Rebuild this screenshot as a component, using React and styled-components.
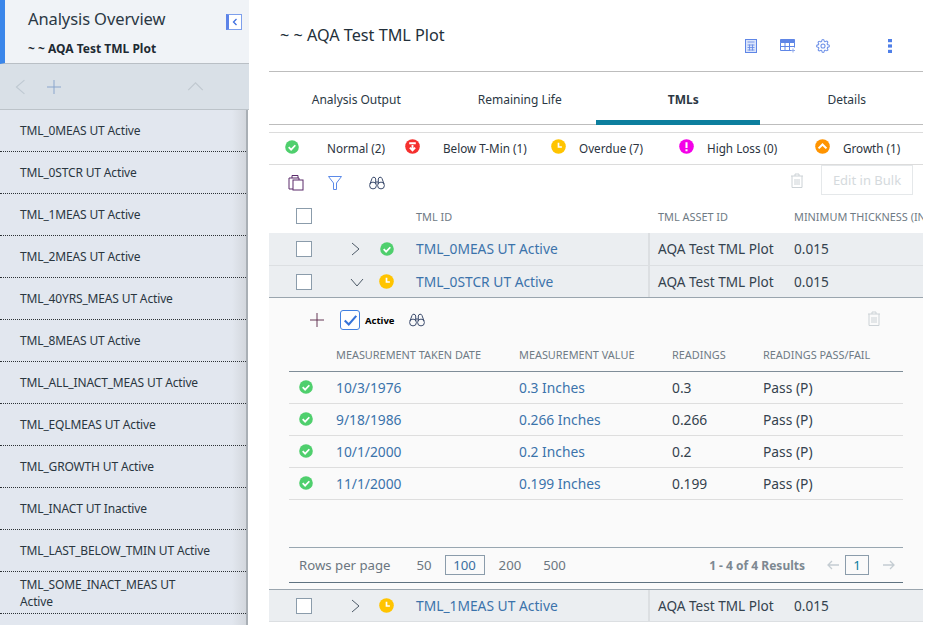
import React from 'react';
import styled, { createGlobalStyle } from 'styled-components';

const Global = createGlobalStyle`
  html, body { margin: 0; padding: 0; background: #fff; }
  body { width: 943px; height: 625px; overflow: hidden; font-family: "Noto Sans", "Open Sans", sans-serif; color: #27343e; }
  * { box-sizing: border-box; }
`;

const Page = styled.div`display: flex; width: 943px; height: 625px; overflow: hidden;`;
const Sidebar = styled.aside`width: 249px; flex: none; display: flex; flex-direction: column; height: 625px;`;
const SideHead = styled.header`
  height: 64px; background: #f0f3f7; border-left: 5px solid #3b86ea; border-bottom: 1px solid #b9bfc5;
  padding: 8px 0 0 23px; position: relative;
`;
const SideTitle = styled.div`font-size: 16.5px; line-height: 21px; color: #2b3844; letter-spacing: -.1px;`;
const SideSub = styled.div`font-size: 12px; font-weight: 700; line-height: 16px; margin-top: 12px; color: #1e2a33;`;
const Collapse = styled.div`
  position: absolute; left: 221px; top: 14px; width: 16px; height: 16px; border: 1px solid #7d9fec; border-left: 3px solid #5c83e8;
  background: #fff; display: flex; align-items: center; justify-content: center;
`;
const SideBar2 = styled.div`
  height: 46px; background: #d9e0e7; border-bottom: 1px solid #bcc3c9; display: flex; align-items: center; padding-left: 13px; flex: none;
`;
const SideGap = styled.span`width: ${p => p.$w}px; flex: none;`;
const SideList = styled.div`
  flex: 1; background: linear-gradient(90deg, #e2e7ef 0, #e2e7ef 232px, #d3d7dd 246px); border-right: 2px solid #a9afb5; overflow: hidden;
  margin-right: 1px; width: 248px;
`;
const SideItem = styled.div`
  height: 42px; padding: 0 0 0 20px; display: flex; align-items: center; font-size: 12px; line-height: 17px; color: #2a363f;
  border-bottom: 1px dotted #2c3236; letter-spacing: -.15px; white-space: pre-line;
`;
const Main = styled.main`width: 654px; margin-left: 20px; flex: none; height: 625px; overflow: hidden;`;
const TitleBar = styled.div`height: 72px; border-bottom: 1px solid #bdbdbd; position: relative; padding: 24px 0 0 11px;`;
const PageTitle = styled.h1`margin: 0; font-size: 16.2px; line-height: 22px; font-weight: 400; color: #23303a;`;
const TopIcons = styled.div`position: absolute; top: 39px; left: 476px; display: flex; align-items: center;`;
const TopIcon = styled.span`display: flex; width: ${p => p.$w}px;`;
const Tabs = styled.nav`height: 53px; border-bottom: 1px solid #bdbdbd; display: flex; width: 654px;`;
const Tab = styled.div`
  width: 163.5px; flex: none; text-align: center; font-size: 12px; line-height: 18px; padding: 19px 0 0 11px; height: 53px; color: #2b3844;
  font-weight: ${p => (p.$active ? 700 : 400)}; border-bottom: ${p => (p.$active ? '5px solid #0d7f9e' : 'none')};
`;
const Legend = styled.div`
  margin-top: 7px; height: 33px; border-top: 1px solid #dcdcdc; border-bottom: 1px solid #dcdcdc; display: grid;
  grid-template-columns: 120px 146px 128px 136px 1fr; padding-left: 16px; align-items: center;
`;
const LegendItem = styled.div`display: flex; align-items: center; font-size: 11.7px; gap: ${p => p.$gap}px; color: #2b3440; height: 31px; padding-bottom: 2px; > svg { margin-top: -2px; }`;
const Toolbar = styled.div`height: 35px; display: flex; align-items: center; padding-left: 19px; position: relative;`;
const ToolIcon = styled.span`display: flex; width: ${p => p.$w}px;`;
const BulkWrap = styled.div`margin-left: auto; display: flex; align-items: center; gap: 17px; padding-right: 10px; margin-top: -5px;`;
const BulkBtn = styled.div`width: 92px; height: 30px; border: 1px solid #e5e8ea; color: #d5dadd; font-size: 13px; display: flex; align-items: center; justify-content: center;`;
const Row = styled.div`
  display: grid; grid-template-columns: 45px 30px 45px 232px 146px 1fr; padding-left: 27px; align-items: center;
  height: ${p => p.$h}px; background: ${p => p.$bg}; font-size: 14px; color: #34424e;
  border-bottom: 1px solid ${p => p.$line};
  ${p => p.$top ? `border-top: 1px solid ${p.$top};` : ''}
`;
const HeadCell = styled.div`font-size: 10.9px; color: #6f7b85; white-space: nowrap; padding-left: ${p => p.$pl || 0}px;`;
const Check = styled.div`width: 16px; height: 16px; border: 1px solid #8b9cab; background: #fff;`;
const IdLink = styled.div`color: #3b73ab; white-space: nowrap; font-size: 13.8px; padding-bottom: 1px;`;
const AssetCell = styled.div`border-left: 2px solid #dcdfe2; height: 100%; padding: 0 0 1px 8px; display: flex; align-items: center; white-space: nowrap; font-size: 13.6px;`;
const PlainCell = styled.div`white-space: nowrap; font-size: 13.6px; padding-bottom: 1px;`;
const Centered = styled.div`display: flex; padding-left: ${p => p.$pl || 0}px;`;
const Panel = styled.section`height: 291px; background: #fafafa; padding: 0 20px; position: relative; display: flex; flex-direction: column;`;
const PanelBar = styled.div`height: 44px; display: flex; align-items: center; position: relative; padding-left: 21px;`;
const ActiveBox = styled.div`
  width: 20px; height: 20px; border: 1px solid #4180e0; border-radius: 3px; background: #fff; margin-left: 16px; display: flex; align-items: center; justify-content: center;
`;
const ActiveText = styled.span`font-size: 9.5px; font-weight: 700; color: #000; margin: 0 14px 0 5px;`;
const PanelTrash = styled.span`margin-left: auto; margin-right: 22px; display: flex; margin-top: -4px;`;
const SubGrid = styled.div`display: grid; grid-template-columns: 37px 183px 153px 91px 1fr; align-items: center; padding-left: 10px;`;
const SubHead = styled(SubGrid)`height: 30px; padding-bottom: 5px; border-bottom: 1px solid #7f8d98; font-size: 10.9px; color: #6f7b85; > span:first-child { grid-column: 2; }`;
const SubRow = styled(SubGrid)`height: 32px; border-bottom: 1px solid #dedede; font-size: 13.8px; color: #34424e; padding-bottom: 1px;`;
const SubLink = styled.div`color: #3b73ab;`;
const PanelFoot = styled.div`
  margin-top: 47px; height: 36px; border-top: 1px solid #98a6b0; border-bottom: 1px solid #5f7280; display: flex; align-items: center; padding-left: 10px; font-size: 13.2px; color: #6b7680;
`;
const Rpp = styled.span`margin-right: 26px;`;
const PageSize = styled.span`
  color: ${p => (p.$boxed ? '#3a6f9f' : '#6b7680')};
  ${p => p.$boxed ? 'border: 1px solid #8b9cab; width: 40px; height: 20px; line-height: 18px; text-align: center;' : ''}
  margin-right: ${p => p.$mr}px;
`;
const Results = styled.span`margin-left: auto; font-size: 12px; font-weight: 700; color: #7d8891; margin-right: 22px;`;
const PageNum = styled.span`width: 24px; height: 20px; border: 1px solid #8b9cab; text-align: center; line-height: 18px; color: #0d7f9e; margin: 0 14px 0 6px;`;
const NextArrow = styled.svg`margin-right: 8px;`;
const Spacer = styled.div`height: 6px; background: #fafafa;`;

const items = ['TML_0MEAS UT Active','TML_0STCR UT Active','TML_1MEAS UT Active','TML_2MEAS UT Active','TML_40YRS_MEAS UT Active','TML_8MEAS UT Active','TML_ALL_INACT_MEAS UT Active','TML_EQLMEAS UT Active','TML_GROWTH UT Active','TML_INACT UT Inactive','TML_LAST_BELOW_TMIN UT Active','TML_SOME_INACT_MEAS UT\nActive'];
const measurements = [['10/3/1976','0.3 Inches','0.3'],['9/18/1986','0.266 Inches','0.266'],['10/1/2000','0.2 Inches','0.2'],['11/1/2000','0.199 Inches','0.199']];

const Status = ({ t, s = 15 }) => {
  const colors = { ok: '#4fcf6d', red: '#f5302e', clock: '#ffc400', pink: '#f400e8', up: '#ff9400' };
  return (
    <svg width={s} height={s} viewBox="0 0 16 16">
      <circle cx="8" cy="8" r="7.8" fill={colors[t]} />
      {t === 'ok' && <path d="M4.2 8.2 7 11l4.8-5" fill="none" stroke="#fff" strokeWidth="2" />}
      {t === 'red' && <path d="M4.5 4.500h7M8 6.500v6M5.200 9.200 8 12.200l2.800-3" fill="none" stroke="#fff" strokeWidth="2" />}
      {t === 'clock' && <path d="M8 4v4.500h3.600" fill="none" stroke="#fff" strokeWidth="1.800" />}
      {t === 'pink' && <path d="M8 3.500v6M8 11v2" fill="none" stroke="#fff" strokeWidth="2.200" />}
      {t === 'up' && <path d="M3.800 10 8 5.800l4.200 4.200" fill="none" stroke="#fff" strokeWidth="2.200" />}
    </svg>
  );
};
const Chevron = ({ d, c = '#4d5a68', s = 14, w = 1 }) => {
  const paths = { right: 'M4 1l7 6-7 6', down: 'M1 4l6 7 6-7', left: 'M10 1 3 7l7 6', up: 'M1 10l6-6 6 6' };
  return <svg width={s} height={s} viewBox="0 0 14 14"><path d={paths[d]} fill="none" stroke={c} strokeWidth={w} /></svg>;
};
const Plus = ({ c, s = 15 }) => <svg width={s} height={s} viewBox="0 0 15 15"><path d="M7.500 0v15M0 7.500h15" stroke={c} strokeWidth="1" /></svg>;
const Binoculars = ({ c = '#3d4d6e' }) => (
  <svg width="16" height="14" viewBox="0 0 16 14" fill="none" stroke={c} strokeWidth="1">
    <circle cx="4" cy="9.500" r="3.400" /><circle cx="12" cy="9.500" r="3.400" />
    <path d="M1 8 3 2.500Q3.500 1 5 1.200 6.500 1.500 6.700 3V8M15 8l-2-5.500Q12.500 1 11 1.200 9.500 1.500 9.300 3V8M6.700 6h2.600" />
  </svg>
);
const Trash = ({ c = '#ccd2d6' }) => (
  <svg width="14" height="15" viewBox="0 0 14 15" fill="none" stroke={c} strokeWidth="1">
    <path d="M1 3h12M5 3V1h4v2M2 3v11.500h10V3M5 6v6M7 6v6M9 6v6" />
  </svg>
);

const Rows = ({ id, t, chevron, line, top, h = 33 }) => (
  <Row $h={h} $bg="#ebeef1" $line={line} $top={top}>
    <Check />
    <Centered $pl={chevron === 'down' ? 9 : 7}><Chevron d={chevron} /></Centered>
    <Centered $pl={t === 'ok' ? 9 : 8}><Status t={t} s={t === 'ok' ? 14 : 15} /></Centered>
    <IdLink>{id}</IdLink>
    <AssetCell>AQA Test TML Plot</AssetCell>
    <PlainCell>0.015</PlainCell>
  </Row>
);

export default function App() {
  return (
    <Page>
      <Global />
      <Sidebar>
        <SideHead>
          <SideTitle>Analysis Overview</SideTitle>
          <SideSub>~ ~ AQA Test TML Plot</SideSub>
          <Collapse><svg width="6" height="8" viewBox="0 0 6 8"><path d="M4.500 1 1.500 4l3 3" fill="none" stroke="#3f6fe0" strokeWidth="1.300" /></svg></Collapse>
        </SideHead>
        <SideBar2>
          <Chevron d="left" c="#bfc9d2" s={16} />
          <SideGap $w={18} />
          <Plus c="#86a3cb" s={14} />
          <SideGap $w={126} />
          <Chevron d="up" c="#c1c9d0" s={17} />
        </SideBar2>
        <SideList>
          {items.map(i => <SideItem key={i}>{i}</SideItem>)}
        </SideList>
      </Sidebar>
      <Main>
        <TitleBar>
          <PageTitle>~ ~ AQA Test TML Plot</PageTitle>
          <TopIcons>
            <TopIcon $w={35}>
              <svg width="12" height="14" viewBox="0 0 12 14" fill="#dbe5fb" stroke="#5f86e6"><rect x=".5" y=".5" width="11" height="13" /><path d="M2.500 3h7M2.500 6h7M2.500 8.500h7M2.500 11h7M4.500 5.500v6M7.500 5.500v6" strokeWidth=".8" /></svg>
            </TopIcon>
            <TopIcon $w={36}>
              <svg width="15" height="14" viewBox="0 0 15 14" fill="none" stroke="#5f86e6"><path d="M.5.500h14v3H.5z" fill="#5f86e6" /><path d="M.5 3.500v8h11M14.500 3.500v5M.5 7.500h14M5 3.500v8M9.500 3.500v8" /><path d="M13 9.500v4M11 11.500h4" stroke="#8fa9ec" /></svg>
            </TopIcon>
            <TopIcon $w={72}>
              <svg width="14" height="14" viewBox="0 0 24 24" fill="none" stroke="#6d90e8" strokeWidth="1.800"><circle cx="12" cy="12" r="3.500" /><path d="M19.400 15a1.650 1.650 0 0 0 .33 1.820l.06.06a2 2 0 1 1-2.830 2.830l-.06-.06a1.650 1.650 0 0 0-2.800 1.170V21a2 2 0 1 1-4 0v-.09a1.650 1.650 0 0 0-2.800-1.170l-.06.06a2 2 0 1 1-2.830-2.830l.06-.06a1.650 1.650 0 0 0-1.170-2.800H3a2 2 0 1 1 0-4h.09A1.650 1.650 0 0 0 4.300 7.300l-.06-.06a2 2 0 1 1 2.830-2.830l.06.06a1.650 1.650 0 0 0 2.800-1.170V3a2 2 0 1 1 4 0v.09a1.650 1.650 0 0 0 2.800 1.170l.06-.06a2 2 0 1 1 2.830 2.830l-.06.06a1.650 1.650 0 0 0 1.170 2.800H21a2 2 0 1 1 0 4h-.09a1.650 1.650 0 0 0-1.510 1.110z" /></svg>
            </TopIcon>
            <svg width="4" height="14" viewBox="0 0 4 14" fill="#4f7fe8"><rect width="4" height="3.200" /><rect y="5.400" width="4" height="3.200" /><rect y="10.800" width="4" height="3.200" /></svg>
          </TopIcons>
        </TitleBar>
        <Tabs>
          <Tab>Analysis Output</Tab>
          <Tab>Remaining Life</Tab>
          <Tab $active>TMLs</Tab>
          <Tab>Details</Tab>
        </Tabs>
        <Legend>
          <LegendItem $gap={28}><Status t="ok" s={14} />Normal (2)</LegendItem>
          <LegendItem $gap={23}><Status t="red" />Below T-Min (1)</LegendItem>
          <LegendItem $gap={13}><Status t="clock" />Overdue (7)</LegendItem>
          <LegendItem $gap={13}><Status t="pink" />High Loss (0)</LegendItem>
          <LegendItem $gap={13}><Status t="up" />Growth (1)</LegendItem>
        </Legend>
        <Toolbar>
          <ToolIcon $w={40}>
            <svg width="16" height="17" viewBox="0 0 16 17" fill="none" stroke="#5a2a6a"><path d="M4 4V1.500h6V4M1 4h10v2M1 4v11h4" /><rect x="5" y="6" width="10" height="10" /></svg>
          </ToolIcon>
          <ToolIcon $w={41}>
            <svg width="14" height="14" viewBox="0 0 14 14" fill="none" stroke="#5c8ae8"><path d="M.5.500h13L8.500 7v6.500h-3V7z" /></svg>
          </ToolIcon>
          <ToolIcon $w={16}><Binoculars /></ToolIcon>
          <BulkWrap>
            <Trash />
            <BulkBtn>Edit in Bulk</BulkBtn>
          </BulkWrap>
        </Toolbar>
        <Row $h={33} $bg="#fff" $line="#fff">
          <Check />
          <span />
          <span />
          <HeadCell>TML ID</HeadCell>
          <HeadCell $pl={10}>TML ASSET ID</HeadCell>
          <HeadCell>MINIMUM THICKNESS (INCHES)</HeadCell>
        </Row>
        <Rows id="TML_0MEAS UT Active" t="ok" chevron="right" line="#dcdfe2" />
        <Rows id="TML_0STCR UT Active" t="clock" chevron="down" line="#9aa5ae" h={32} />
        <Panel>
          <PanelBar>
            <Plus c="#5a2a4a" s={14} />
            <ActiveBox><svg width="15" height="13" viewBox="0 0 13 11"><path d="M1.500 5.500 5 9l6.500-7.500" fill="none" stroke="#3673d8" strokeWidth="1.800" /></svg></ActiveBox>
            <ActiveText>Active</ActiveText>
            <Binoculars />
            <PanelTrash><Trash /></PanelTrash>
          </PanelBar>
          <SubHead>
            <span>MEASUREMENT TAKEN DATE</span>
            <span>MEASUREMENT VALUE</span>
            <span>READINGS</span>
            <span>READINGS PASS/FAIL</span>
          </SubHead>
          {measurements.map(m => (
            <SubRow key={m[0]}>
              <Centered><Status t="ok" s={14} /></Centered>
              <SubLink>{m[0]}</SubLink>
              <SubLink>{m[1]}</SubLink>
              <span>{m[2]}</span>
              <span>Pass (P)</span>
            </SubRow>
          ))}
          <PanelFoot>
            <Rpp>Rows per page</Rpp>
            <PageSize $mr={13}>50</PageSize>
            <PageSize $boxed $mr={14}>100</PageSize>
            <PageSize $mr={22}>200</PageSize>
            <PageSize $mr={0}>500</PageSize>
            <Results>1 - 4 of 4 Results</Results>
            <svg width="12" height="10" viewBox="0 0 12 10" fill="none" stroke="#c4ccd2" strokeWidth="1.300"><path d="M12 5H1M5 1 1 5l4 4" /></svg>
            <PageNum>1</PageNum>
            <NextArrow width="12" height="10" viewBox="0 0 12 10" fill="none" stroke="#c4ccd2" strokeWidth="1.300"><path d="M0 5h11M7 1l4 4-4 4" /></NextArrow>
          </PanelFoot>
          <Spacer />
        </Panel>
        <Rows id="TML_1MEAS UT Active" t="clock" chevron="right" line="#dcdfe2" top="#9aa5ae" />
      </Main>
    </Page>
  );
}
